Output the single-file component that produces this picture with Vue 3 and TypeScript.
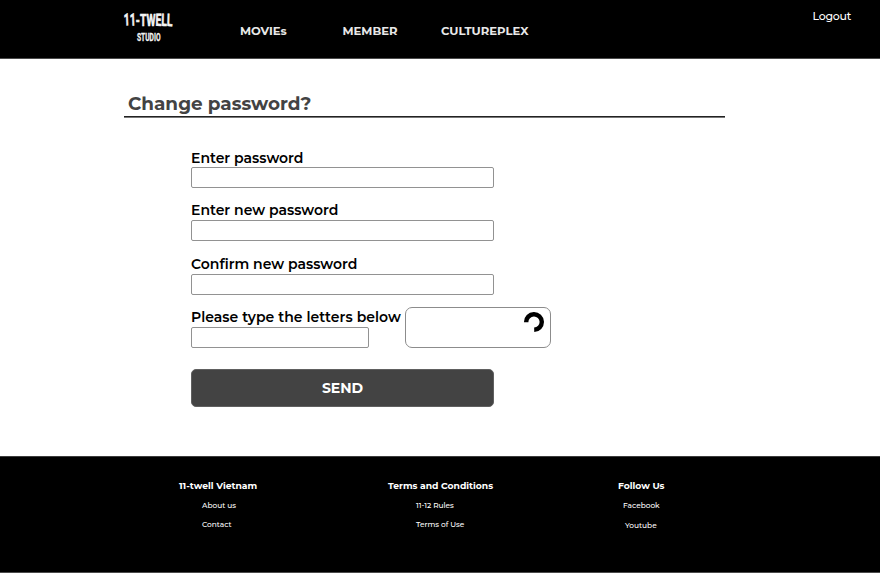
<script setup lang="ts">
import { ref } from 'vue'

interface FooterColumn {
  id: string
  title: string
  links: string[]
}

const passwordFields = [
  { id: 'current', label: 'Enter password' },
  { id: 'next', label: 'Enter new password' },
  { id: 'confirm', label: 'Confirm new password' },
]
const values = ref<Record<string, string>>({ current: '', next: '', confirm: '' })
const letters = ref('')

const footer: FooterColumn[] = [
  { id: 'about', title: '11-twell Vietnam', links: ['About us', 'Contact'] },
  { id: 'terms', title: 'Terms and Conditions', links: ['11-12 Rules', 'Terms of Use'] },
  { id: 'follow', title: 'Follow Us', links: ['Facebook', 'Youtube'] },
]
</script>

<template>
  <div class="page">
    <header class="header">
      <svg class="logo" width="56" height="36" viewBox="0 0 56 36">
        <text x="0" y="15.8" font-size="17" textLength="48.4" lengthAdjust="spacingAndGlyphs" rotate="-4 -3 0 0 0 1 2 3">11-TWELL</text>
        <text class="studio" x="13" y="31.4" font-size="11.5" textLength="23.5" lengthAdjust="spacingAndGlyphs">STUDIO</text>
      </svg>
      <nav class="nav">
        <a class="movies">MOVIEs</a>
        <a class="member">MEMBER</a>
        <a class="culture">CULTUREPLEX</a>
      </nav>
      <a class="logout">Logout</a>
    </header>

    <main class="main">
      <h1 class="title"><span>Change password?</span></h1>
      <form class="form" @submit.prevent>
        <div v-for="f in passwordFields" :key="f.id" class="field" :class="f.id">
          <label :for="f.id">{{ f.label }}</label>
          <input :id="f.id" v-model="values[f.id]" type="password" />
        </div>
        <div class="captcha-row">
          <div class="field letters">
            <label for="letters">Please type the letters below</label>
            <input id="letters" v-model="letters" type="text" />
          </div>
          <div class="captcha">
            <svg width="20" height="20" viewBox="0 0 20 20">
              <path d="M2.2 10.2A7.8 7.8 0 1 1 10.2 17.8" fill="none" stroke="#000" stroke-width="4.4" />
            </svg>
          </div>
        </div>
        <button class="send" type="submit">SEND</button>
      </form>
    </main>

    <footer class="footer">
      <section v-for="c in footer" :key="c.id" :class="c.id">
        <h2>{{ c.title }}</h2>
        <a v-for="l in c.links" :key="l">{{ l }}</a>
      </section>
    </footer>
  </div>
</template>

<style>
body {
  margin: 0;
  background: #fff;
}
</style>

<style scoped>
.page {
  width: 880px;
  height: 573px;
  display: flex;
  flex-direction: column;
  overflow: hidden;
  font-family: Montserrat, Inter, sans-serif;
  color: #000;
  white-space: nowrap;
}
.page * {
  box-sizing: border-box;
}
.header {
  height: 59px;
  flex: none;
  display: flex;
  align-items: flex-start;
  background: #000;
  border-bottom: 1px solid #4b4b4b;
  padding-left: 124px;
}
.logo {
  margin-top: 10px;
  flex: none;
  overflow: visible;
  fill: #f4f4f4;
  stroke: #f4f4f4;
  stroke-width: 0.6px;
  font-family: Roboto, "Liberation Sans", sans-serif;
  font-weight: 700;
}
.studio {
  stroke-width: 0.3px;
}
.nav {
  display: flex;
  margin: 23px 0 0 60px;
  color: #e8e8e8;
  font-size: 11.6px;
  font-weight: 700;
  line-height: 16px;
}
.movies {
  width: 102.5px;
}
.member {
  width: 98.5px;
}
.logout {
  margin: 8px 29px 0 auto;
  color: #fff;
  font-size: 11px;
  font-weight: 500;
  line-height: 16px;
  letter-spacing: -0.25px;
}
.main {
  height: 397px;
  flex: none;
  padding: 34px 0 0 124px;
}
.title {
  width: 601px;
  height: 25px;
  margin: 0;
  padding-left: 4px;
  border-bottom: 1px solid #222;
  box-shadow: inset 0 -1px 0 #fff, 0 1px 0 #777;
  height: 24px;
  margin-bottom: 1px;
  color: #434343;
  font-size: 18.4px;
  font-weight: 700;
  line-height: 21px;
}
.form {
  display: flex;
  flex-direction: column;
  align-items: flex-start;
  padding: 31px 0 0 67px;
}
.field {
  display: flex;
  flex-direction: column;
  align-items: flex-start;
  height: 53px;
}
.field.next {
  height: 54px;
}
.field label {
  height: 18px;
  font-size: 14px;
  font-weight: 600;
  line-height: 16px;
}
.field.current label {
  line-height: 18px;
}
.field input {
  width: 303px;
  height: 21px;
  padding: 0 4px;
  border: 1px solid #929292;
  border-radius: 2px;
  outline: 0;
  background: #fff;
  font: inherit;
}
.captcha-row {
  display: flex;
  height: 60px;
}
.field.letters {
  width: 214px;
}
.field.letters label {
  letter-spacing: 0.04px;
}
.field.letters input {
  width: 178px;
}
.captcha {
  display: flex;
  justify-content: flex-end;
  width: 146px;
  height: 41px;
  margin-top: -2px;
  padding: 4px 6px;
  border: 1px solid #8c8c8c;
  border-radius: 7px;
}
.send {
  width: 303px;
  height: 38px;
  padding: 0;
  border: 1px solid #606060;
  border-radius: 5px;
  background: #434343;
  color: #fff;
  font: 700 14px Montserrat, Inter, sans-serif;
}
.footer {
  height: 117px;
  flex: none;
  display: flex;
  background: #000;
  border-top: 1px solid #3c3c3c;
  border-bottom: 1px solid #4b4b4b;
  padding: 22px 0 0 179px;
  color: #fff;
}
.footer section {
  display: flex;
  flex-direction: column;
  align-items: flex-start;
}
.about {
  width: 209px;
}
.terms {
  width: 230px;
}
.footer h2 {
  margin: 0 0 6px;
  font-size: 9.2px;
  font-weight: 700;
  line-height: 14px;
}
.footer a {
  height: 19px;
  color: #fff;
  font-size: 7.4px;
  font-weight: 500;
  line-height: 14px;
}
.about a {
  margin-left: 23px;
}
.terms a {
  margin-left: 28px;
}
.follow a {
  margin-left: 5px;
}
.follow a:last-child {
  margin: 1px 0 0 7px;
}
</style>
